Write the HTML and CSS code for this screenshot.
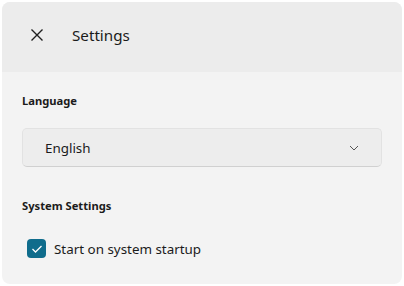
FILE: index.html
```html
<!DOCTYPE html>
<html lang="en">
<head>
  <meta charset="UTF-8" />
  <title>Settings</title>
  <link rel="stylesheet" href="styles.css">
</head>
<body>
  <div class="window">
    <div class="header">
      <button class="close-btn" aria-label="Close">
        <svg width="14" height="14" viewBox="0 0 14 14">
          <path d="M1.5 1.5 L12.5 12.5 M12.5 1.5 L1.5 12.5" stroke="#1f1f1f" stroke-width="1.4" fill="none"/>
        </svg>
      </button>
      <span class="title">Settings</span>
    </div>

    <div class="content">
      <div class="section-label">Language</div>
      <div class="select">
        <span>English</span>
        <svg width="10" height="6" viewBox="0 0 10 6">
          <path d="M1 1 L5 5 L9 1" stroke="#555" stroke-width="1" fill="none"/>
        </svg>
      </div>

      <div class="section-label system">System Settings</div>
      <label class="check-row">
        <span class="checkbox">
          <svg width="12" height="10" viewBox="0 0 12 10">
            <path d="M1.5 5 L4.5 8 L10.5 2" stroke="#fff" stroke-width="1.3" fill="none"/>
          </svg>
        </span>
        Start on system startup
      </label>
    </div>
  </div>
</body>
</html>
```

FILE: styles.css
```css
html, body {
  margin: 0;
  height: 100%;
  background-color: #fff;
  font-family: "Segoe UI", "Noto Sans", "Open Sans", sans-serif;
  color: #1b1b1b;
}

body {
  padding: 2px;
  box-sizing: border-box;
}

.window {
  width: 400px;
  height: 282px;
  border-radius: 8px;
  overflow: hidden;
  background-color: #f3f3f3;
  display: flex;
  flex-direction: column;
}

.header {
  background-color: #ececec;
  height: 70px;
  box-sizing: border-box;
  padding: 0 0 4px 28px;
  display: flex;
  align-items: center;
  flex-shrink: 0;
}

.close-btn {
  border: none;
  background: none;
  padding: 0;
  width: 14px;
  height: 14px;
  display: flex;
  margin-right: 28px;
}

.title {
  font-size: 15.2px;
}

.content {
  padding: 21px 20px 0 20px;
}

.section-label {
  font-size: 11.2px;
  font-weight: 700;
  line-height: 16px;
}

.section-label.system {
  margin-top: 31px;
}

.select {
  margin-top: 19px;
  height: 39px;
  box-sizing: border-box;
  width: 360px;
  border: 1px solid #e2e2e2;
  border-bottom-color: #d0d0d0;
  border-radius: 5px;
  background-color: #ededed;
  display: flex;
  align-items: center;
  justify-content: space-between;
  padding: 0 22px 0 22px;
  font-size: 13.4px;
}

.check-row {
  margin-top: 25px;
  display: flex;
  align-items: center;
  font-size: 13.4px;
  padding-left: 5px;
}

.checkbox {
  width: 19px;
  height: 19px;
  border-radius: 4px;
  background-color: #0f6c8c;
  display: flex;
  align-items: center;
  justify-content: center;
  margin-right: 8px;
}
```
